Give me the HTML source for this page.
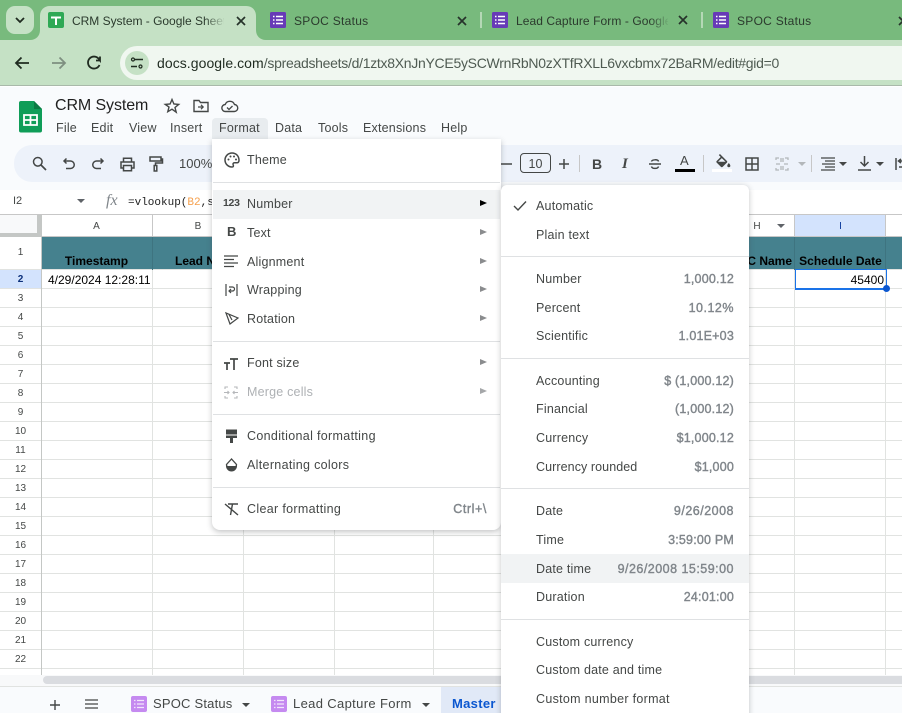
<!DOCTYPE html>
<html><head><meta charset="utf-8">
<style>
html,body{margin:0;padding:0;width:902px;height:713px;overflow:hidden;background:#fff;font-family:"Liberation Sans",sans-serif}
div,span,svg{position:absolute;display:block;box-sizing:border-box}
.t{white-space:nowrap;line-height:20px;height:20px}
.tab{font-size:12px;color:#2b3a2d;top:11px;letter-spacing:.28px}
.m{font-size:12.5px;color:#444746;top:118px;letter-spacing:.2px}
.i{font-size:12.5px;color:#444746;left:247px;letter-spacing:.2px;margin-top:1px}
.s{font-size:12.5px;color:#444746;left:536px;letter-spacing:.2px;margin-top:1px}
.v{font-size:12.5px;color:#80868b;right:168px;letter-spacing:.2px;margin-top:1px;-webkit-text-stroke:.4px #80868b}
.sep{height:1px;background:#dfe1e3}
.r{font-size:10px;color:#444746;left:0;width:41px;text-align:center;margin-top:1px}
.c{font-size:10px;color:#444746;text-align:center;top:217px}
.h{font-size:12px;font-weight:bold;color:#000;top:251px}
.ar{width:0;height:0;border-left:7px solid #8a8c8e;border-top:3.5px solid transparent;border-bottom:3.5px solid transparent;left:480px}
svg{overflow:visible}
.ic{fill:none;stroke:#444746;stroke-width:1.5}
</style></head><body>
<div style="left:0;top:0;width:902px;height:713px;overflow:hidden">

<!-- Chrome tab strip -->
<div style="left:0;top:0;width:902px;height:40px;background:#78ba7d"></div>
<div style="left:6px;top:6px;width:28px;height:28px;border-radius:9px;background:#c5e1c5"></div>
<svg style="left:0;top:0" width="40" height="40"><path d="M16 18l4 4 4-4" fill="none" stroke="#1f2b20" stroke-width="1.8"/></svg>
<svg style="left:30px;top:0" width="236" height="41"><path d="M0 40c6 0 10-4 10-10V16C10 10 14 6 20 6H216c6 0 10 4 10 10v14c0 6 4 10 10 10z" fill="#c5e1c5"/></svg>
<svg style="left:48px;top:12px" width="16" height="16"><rect width="16" height="16" rx="2" fill="#2fa955"/><path d="M3 5.500h10M8 5.500V13" stroke="#fff" stroke-width="2" fill="none"/></svg>
<div class="t tab" style="left:72px;width:152px;overflow:hidden;letter-spacing:-.02px">CRM System - Google Sheets</div>
<div style="left:204px;top:12px;width:22px;height:18px;background:linear-gradient(90deg,rgba(197,225,197,0),#c5e1c5)"></div>
<svg style="left:235px;top:15px" width="12" height="12"><path d="M2 2l8 8M10 2l-8 8" stroke="#26332a" stroke-width="1.7"/></svg>

<svg style="left:270px;top:12px" width="16" height="16"><rect width="16" height="16" rx="1.500" fill="#673ab7"/><path d="M3 4.500h1.500M6 4.500h7M3 8h1.500M6 8h7M3 11.500h1.500M6 11.500h7" stroke="#fff" stroke-width="1.600"/></svg>
<div class="t tab" style="left:294px">SPOC Status</div>
<svg style="left:456px;top:15px" width="12" height="12"><path d="M2 2l8 8M10 2l-8 8" stroke="#26332a" stroke-width="1.7"/></svg>
<div style="left:480px;top:12px;width:2px;height:16px;background:#b5d8b6"></div>
<svg style="left:492px;top:12px" width="16" height="16"><rect width="16" height="16" rx="1.500" fill="#673ab7"/><path d="M3 4.500h1.500M6 4.500h7M3 8h1.500M6 8h7M3 11.500h1.500M6 11.500h7" stroke="#fff" stroke-width="1.600"/></svg>
<div class="t tab" style="left:516px;width:152px;overflow:hidden;letter-spacing:.08px">Lead Capture Form - Google Forms</div>
<div style="left:650px;top:12px;width:20px;height:18px;background:linear-gradient(90deg,rgba(120,186,125,0),#78ba7d)"></div>
<svg style="left:677px;top:14px" width="12" height="12"><path d="M2 2l8 8M10 2l-8 8" stroke="#26332a" stroke-width="1.7"/></svg>
<div style="left:701px;top:12px;width:2px;height:16px;background:#b5d8b6"></div>
<svg style="left:713px;top:12px" width="16" height="16"><rect width="16" height="16" rx="1.500" fill="#673ab7"/><path d="M3 4.500h1.500M6 4.500h7M3 8h1.500M6 8h7M3 11.500h1.500M6 11.500h7" stroke="#fff" stroke-width="1.600"/></svg>
<div class="t tab" style="left:737px">SPOC Status</div>
<svg style="left:897px;top:15px" width="12" height="12"><path d="M2 2l8 8M10 2l-8 8" stroke="#26332a" stroke-width="1.7"/></svg>

<!-- Chrome toolbar -->
<div style="left:0;top:40px;width:902px;height:46px;background:#c5e1c5;border-bottom:1px solid #a9b9aa"></div>
<svg style="left:12px;top:53px" width="20" height="20"><path d="M17 10H4M9.500 4.500L4 10l5.500 5.500" fill="none" stroke="#1f2b20" stroke-width="1.800"/></svg>
<svg style="left:48px;top:53px" width="20" height="20"><path d="M4 10h13M11.500 4.500L17 10l-5.500 5.500" fill="none" stroke="#7e8f80" stroke-width="1.800"/></svg>
<svg style="left:84px;top:53px" width="20" height="20"><path d="M15.500 12a6 6 0 1 1-.8-6.200L16 7.500V3.500M16 7.500h-4" fill="none" stroke="#1f2b20" stroke-width="1.800"/></svg>
<div style="left:120px;top:46px;width:800px;height:34px;border-radius:17px;background:#f0f7f0"></div>
<div style="left:125px;top:51px;width:24px;height:24px;border-radius:12px;background:#c5e1c5"></div>
<svg style="left:130px;top:56px" width="14" height="14"><path d="M1 10.500h6M3 3.500h10" stroke="#1f2b20" stroke-width="1.400" fill="none"/><circle cx="3" cy="3.500" r="1.500" fill="#c5e1c5" stroke="#1f2b20" stroke-width="1.200"/><circle cx="10.500" cy="10.500" r="1.500" fill="#c5e1c5" stroke="#1f2b20" stroke-width="1.200"/></svg>
<div class="t" style="left:157px;top:53px;font-size:14px;color:#1f2b20;letter-spacing:.06px">docs.google.com<span style="position:static;display:inline;color:#4f5b52;letter-spacing:-.285px">/spreadsheets/d/1ztx8XnJnYCE5ySCWrnRbN0zXTfRXLL6vxcbmx72BaRM/edit#gid=0</span></div>

<!-- Docs header -->
<div style="left:0;top:87px;width:902px;height:103px;background:#f9fbfd"></div>
<svg style="left:19px;top:101px" width="23" height="32"><path d="M2 0H15L23 8V29.500a2 2 0 0 1-2 2H2a2 2 0 0 1-2-2V2a2 2 0 0 1 2-2z" fill="#0f9d58"/><path d="M15 0l8 8h-8z" fill="#0b7a43"/><path d="M5 14h13v10H5z" fill="none" stroke="#fff" stroke-width="1.800"/><path d="M5 19h13M11.500 14v10" stroke="#fff" stroke-width="1.800"/></svg>
<div class="t" style="left:55px;top:96px;font-size:16px;color:#1f1f1f;letter-spacing:-.1px">CRM System</div>
<svg style="left:164px;top:98px" width="16" height="16"><path d="M8 1.500l1.900 4.500 4.800.4-3.700 3.100 1.200 4.700L8 11.200l-4.200 2.500 1.200-4.700L1.300 6.400 6.100 6z" fill="none" stroke="#444746" stroke-width="1.400"/></svg>
<svg style="left:193px;top:99px" width="16" height="14"><path d="M1 1.500h5l1.500 2h7.500v9H1z" fill="none" stroke="#444746" stroke-width="1.400"/><path d="M5 8h5M8 5.800L10.200 8 8 10.200" fill="none" stroke="#444746" stroke-width="1.200"/></svg>
<svg style="left:221px;top:99px" width="17" height="14"><path d="M4.500 12.500a3.500 3.500 0 0 1-.3-7A5 5 0 0 1 13.500 5.500a3.500 3.500 0 0 1-.5 7z" fill="none" stroke="#444746" stroke-width="1.400"/><path d="M6 8.500l2 2 3.500-3.500" fill="none" stroke="#444746" stroke-width="1.300"/></svg>

<div class="t m" style="left:56px">File</div>
<div class="t m" style="left:91px">Edit</div>
<div class="t m" style="left:129px">View</div>
<div class="t m" style="left:170px">Insert</div>
<div style="left:212px;top:118px;width:56px;height:21px;border-radius:4px 4px 0 0;background:#e8ecef"></div>
<div class="t m" style="left:219px">Format</div>
<div class="t m" style="left:275px">Data</div>
<div class="t m" style="left:318px">Tools</div>
<div class="t m" style="left:363px">Extensions</div>
<div class="t m" style="left:441px">Help</div>

<!-- Sheets toolbar -->
<div style="left:14px;top:145px;width:920px;height:37px;border-radius:18px;background:#edf2fa"></div>
<svg style="left:32px;top:156px" width="15" height="15"><circle cx="5.800" cy="5.800" r="4.300" fill="none" stroke="#444746" stroke-width="1.500"/><path d="M9 9l5 5" stroke="#444746" stroke-width="1.700"/></svg>
<svg style="left:62px;top:157px" width="14" height="14"><path d="M4.500 1.500L2 4l2.500 2.500M2 4h6.500a3.500 3.500 0 0 1 0 7.500H4" class="ic"/></svg>
<svg style="left:91px;top:157px" width="14" height="14"><path d="M9.500 1.500L12 4 9.500 6.500M12 4H5.500a3.500 3.500 0 0 0 0 7.500H10" class="ic"/></svg>
<svg style="left:120px;top:157px" width="15" height="15"><path d="M3.500 5V1.200h8V5M3.500 11H1V5h13v6h-2.500M3.500 8.500h8v5.300h-8z" class="ic"/></svg>
<svg style="left:149px;top:156px" width="14" height="16"><path d="M1 1h11v4H1zM12 3h1.500v4H6.500v2.500M5.200 9.500h2.600v5.500H5.200z" class="ic"/></svg>
<div class="t" style="left:179px;top:154px;font-size:13px;color:#444746">100%</div>
<svg style="left:499px;top:160px" width="14" height="8"><path d="M1 4h12" stroke="#444746" stroke-width="1.500"/></svg>
<div style="left:520px;top:153px;width:31px;height:20px;border:1px solid #444746;border-radius:4px"></div>
<div class="t" style="left:520px;top:154px;width:31px;text-align:center;font-size:12.500px;color:#444746">10</div>
<svg style="left:558px;top:158px" width="12" height="12"><path d="M1 6h10M6 1v10" stroke="#444746" stroke-width="1.500"/></svg>
<div style="left:579px;top:155px;width:1px;height:17px;background:#c7c7c7"></div>
<div class="t" style="left:592px;top:154px;font-size:14px;font-weight:bold;color:#444746">B</div>
<div class="t" style="left:622px;top:154px;font-size:15px;font-weight:bold;font-style:italic;font-family:'Liberation Serif',serif;color:#444746">I</div>
<svg style="left:648px;top:157px" width="14" height="14"><path d="M1 7h12M3.500 4.500C4 2.500 10 2 10.500 4.500M3.500 9.500C4 12 10 12 10.500 9.500" class="ic"/></svg>
<div class="t" style="left:680px;top:151px;font-size:13px;color:#444746">A</div>
<div style="left:675px;top:169px;width:20px;height:3px;background:#000"></div>
<div style="left:703px;top:155px;width:1px;height:17px;background:#c7c7c7"></div>
<svg style="left:714px;top:154px" width="18" height="14"><g transform="scale(.78)"><path d="M16.560 8.940L7.620 0 6.210 1.410l2.380 2.380-5.150 5.150c-.59.59-.59 1.540 0 2.120l5.500 5.500c.29.29.68.44 1.060.44s.77-.15 1.060-.44l5.500-5.500c.59-.58.59-1.530 0-2.120zM5.210 10L10 5.210 14.790 10H5.210zM19 11.500s-2 2.170-2 3.500c0 1.100.9 2 2 2s2-.9 2-2c0-1.330-2-3.500-2-3.500z" fill="#444746"/></g></svg>
<div style="left:712px;top:169px;width:20px;height:3px;background:#fff"></div>
<svg style="left:745px;top:157px" width="14" height="14"><path d="M1 1h12v12H1zM1 7h12M7 1v12" class="ic"/></svg>
<svg style="left:775px;top:157px" width="14" height="14"><path d="M1 3V1h3M10 1h3v2M1 11v2h3M10 13h3v-2M6 1v4M8 1v4M6 9v4M8 9v4M1 7h4M13 7H9" fill="none" stroke="#b3b7ba" stroke-width="1.300"/></svg>
<div style="left:798px;top:162px;border-top:4px solid #b3b7ba;border-left:4px solid transparent;border-right:4px solid transparent;width:0;height:0"></div>
<div style="left:811px;top:155px;width:1px;height:17px;background:#c7c7c7"></div>
<svg style="left:821px;top:157px" width="14" height="14"><path d="M0 1h14M4 4h10M1 7h13M4 10h10M0 13h14" stroke="#444746" stroke-width="1.300"/></svg>
<div style="left:839px;top:162px;border-top:4px solid #444746;border-left:4px solid transparent;border-right:4px solid transparent;width:0;height:0"></div>
<svg style="left:858px;top:156px" width="13" height="15"><path d="M6.500 0v9M2.500 6l4 4 4-4M0 14h13" class="ic"/></svg>
<div style="left:876px;top:162px;border-top:4px solid #444746;border-left:4px solid transparent;border-right:4px solid transparent;width:0;height:0"></div>
<svg style="left:895px;top:158px" width="10" height="12"><path d="M1 0v12M10 3H4M4 9h6M6 1L3.500 3 6 5" class="ic"/></svg>

<!-- Formula bar -->
<div style="left:0;top:190px;width:902px;height:24px;background:#fff"></div>
<div class="t" style="left:13px;top:191px;font-size:11px;color:#444746">I2</div>
<div style="left:77px;top:199px;border-top:4px solid #5f6368;border-left:4px solid transparent;border-right:4px solid transparent;width:0;height:0"></div>
<div class="t" style="left:106px;top:191px;font-size:16px;font-style:italic;font-family:'Liberation Serif',serif;color:#80868b">fx</div>
<div class="t" style="left:128px;top:193px;font-size:11px;font-family:'Liberation Mono',monospace;color:#1f1f1f">=vlookup(<span style="position:static;display:inline;color:#f6a04d">B2</span>,s</div>

<!-- Grid -->
<div style="left:0;top:214px;width:902px;height:461px;background:#fff"></div>
<div style="left:0;top:214px;width:902px;height:1px;background:#c7c7c7"></div>
<div style="left:0;top:215px;width:41px;height:22px;background:#f8f9fa"></div>
<div style="left:37px;top:215px;width:4px;height:22px;background:#c4c7c5"></div>
<div style="left:0;top:233px;width:41px;height:4px;background:#c4c7c5"></div>
<div style="left:795px;top:215px;width:91px;height:21px;background:#d3e3fd"></div>
<div style="left:41px;top:236px;width:861px;height:1px;background:#c7c7c7"></div>
<div style="left:0;top:270px;width:41px;height:19px;background:#d3e3fd"></div>
<div style="left:41px;top:237px;width:861px;height:33px;background:#45818e"></div>
<div style="left:0;top:288px;width:902px;height:387px;background:repeating-linear-gradient(180deg,#e1e3e1 0,#e1e3e1 1px,transparent 1px,transparent 19px)"></div>
<div style="left:0;top:269px;width:902px;height:1px;background:#e1e3e1"></div>
<div style="left:41px;top:215px;width:1px;height:460px;background:#c4c7c5"></div>
<div style="left:152px;top:215px;width:1px;height:22px;background:#c7c7c7"></div>
<div style="left:152px;top:237px;width:1px;height:33px;background:#3e7480"></div>
<div style="left:152px;top:270px;width:1px;height:405px;background:#e1e3e1"></div>
<div style="left:243px;top:215px;width:1px;height:22px;background:#c7c7c7"></div>
<div style="left:243px;top:270px;width:1px;height:405px;background:#e1e3e1"></div>
<div style="left:334px;top:270px;width:1px;height:405px;background:#e1e3e1"></div>
<div style="left:433px;top:270px;width:1px;height:405px;background:#e1e3e1"></div>
<div style="left:794px;top:215px;width:1px;height:22px;background:#c7c7c7"></div>
<div style="left:794px;top:237px;width:1px;height:33px;background:#3e7480"></div>
<div style="left:794px;top:270px;width:1px;height:405px;background:#e1e3e1"></div>
<div style="left:885px;top:215px;width:1px;height:22px;background:#c7c7c7"></div>
<div style="left:885px;top:237px;width:1px;height:33px;background:#3e7480"></div>
<div style="left:885px;top:270px;width:1px;height:405px;background:#e1e3e1"></div>

<div class="t c" style="left:41px;width:111px">A</div>
<div class="t c" style="left:153px;width:90px">B</div>
<div class="t c" style="left:747px;width:20px">H</div>
<div style="left:777px;top:224px;border-top:4px solid #5f6368;border-left:4px solid transparent;border-right:4px solid transparent;width:0;height:0"></div>
<div class="t c" style="left:795px;width:91px;color:#0b3a9c">I</div>

<div class="t h" style="left:41px;width:111px;text-align:center">Timestamp</div>
<div class="t h" style="left:175px">Lead N</div>
<div class="t h" style="left:740px;width:52px;text-align:right">C Name</div>
<div class="t h" style="left:795px;width:91px;text-align:center">Schedule Date</div>
<div class="t" style="left:48px;top:270px;font-size:12px;color:#000">4/29/2024 12:28:11</div>
<div class="t" style="left:795px;top:270px;width:89px;text-align:right;font-size:12px;color:#000">45400</div>
<div style="left:795px;top:269px;width:92px;height:21px;border:2px solid #1a73e8;border-top:1px solid #1a73e8;border-left:1px solid #1a73e8;border-right:1px solid #1a73e8"></div>
<div style="left:883px;top:285px;width:7px;height:7px;border-radius:50%;background:#0b57d0"></div>

<div class="t r" style="top:242px">1</div>
<div class="t r" style="top:269px;font-weight:bold;color:#0b2f7a">2</div>
<div class="t r" style="top:288px">3</div>
<div class="t r" style="top:307px">4</div>
<div class="t r" style="top:326px">5</div>
<div class="t r" style="top:345px">6</div>
<div class="t r" style="top:364px">7</div>
<div class="t r" style="top:383px">8</div>
<div class="t r" style="top:402px">9</div>
<div class="t r" style="top:421px">10</div>
<div class="t r" style="top:440px">11</div>
<div class="t r" style="top:459px">12</div>
<div class="t r" style="top:478px">13</div>
<div class="t r" style="top:497px">14</div>
<div class="t r" style="top:516px">15</div>
<div class="t r" style="top:535px">16</div>
<div class="t r" style="top:554px">17</div>
<div class="t r" style="top:573px">18</div>
<div class="t r" style="top:592px">19</div>
<div class="t r" style="top:611px">20</div>
<div class="t r" style="top:630px">21</div>
<div class="t r" style="top:649px">22</div>

<!-- Scroll bar -->
<div style="left:0;top:675px;width:902px;height:12px;background:#f8f9fa;border-bottom:1px solid #e1e3e1"></div>
<div style="left:43px;top:676px;width:859px;height:8px;border-radius:4px 0 0 4px;background:#dadce0"></div>

<!-- Bottom bar -->
<div style="left:0;top:687px;width:902px;height:26px;background:#f9fbfd"></div>
<svg style="left:49px;top:699px" width="12" height="12"><path d="M1 6h10M6 1v10" stroke="#444746" stroke-width="1.400"/></svg>
<svg style="left:85px;top:699px" width="14" height="10"><path d="M0 1h13M0 5h13M0 9h13" stroke="#444746" stroke-width="1.300"/></svg>
<svg style="left:131px;top:696px" width="16" height="16"><rect width="16" height="16" rx="2" fill="#c58af0"/><path d="M3 4.500h1.500M6 4.500h7M3 8h1.500M6 8h7M3 11.500h1.500M6 11.500h7" stroke="#f3e6fb" stroke-width="1.300"/></svg>
<div class="t" style="left:153px;top:694px;font-size:13px;color:#444746;letter-spacing:.2px">SPOC Status</div>
<div style="left:242px;top:703px;border-top:4px solid #444746;border-left:4px solid transparent;border-right:4px solid transparent;width:0;height:0"></div>
<svg style="left:271px;top:696px" width="16" height="16"><rect width="16" height="16" rx="2" fill="#c58af0"/><path d="M3 4.500h1.500M6 4.500h7M3 8h1.500M6 8h7M3 11.500h1.500M6 11.500h7" stroke="#f3e6fb" stroke-width="1.300"/></svg>
<div class="t" style="left:293px;top:694px;font-size:13px;color:#444746;letter-spacing:.35px">Lead Capture Form</div>
<div style="left:422px;top:703px;border-top:4px solid #444746;border-left:4px solid transparent;border-right:4px solid transparent;width:0;height:0"></div>
<div style="left:441px;top:687px;width:70px;height:26px;background:#e1e9f7"></div>
<div class="t" style="left:452px;top:694px;font-size:13px;font-weight:bold;color:#0b57d0;letter-spacing:.3px">Master</div>

<!-- Format menu -->
<div style="left:212px;top:139px;width:289px;height:391px;background:#fff;border-radius:0 0 8px 8px;box-shadow:0 2px 6px rgba(60,64,67,.3)"></div>
<svg style="left:224px;top:152px" width="16" height="16"><path d="M8 1a7 7 0 0 0 0 14c1.500 0 1.700-1.200 1.200-2-.6-1 0-2.200 1.300-2.200H13c1.200 0 2-1 2-2.500C15 4 12 1 8 1z" class="ic"/><circle cx="4.500" cy="7.500" r="1" fill="#444746"/><circle cx="6.500" cy="4.500" r="1" fill="#444746"/><circle cx="10" cy="4.500" r="1" fill="#444746"/><circle cx="12" cy="7.500" r="1" fill="#444746"/></svg>
<div class="t i" style="top:149px">Theme</div>
<div class="sep" style="left:213px;top:182px;width:287px"></div>
<div style="left:213px;top:190px;width:287px;height:29px;background:#f1f3f4"></div>
<div class="t" style="left:223px;top:193px;font-size:10.500px;font-weight:bold;color:#444746;letter-spacing:-.3px">123</div>
<div class="t i" style="top:193px">Number</div>
<div class="ar" style="top:200px;border-left-color:#000"></div>
<div class="t" style="left:227px;top:222px;font-size:13px;font-weight:bold;color:#444746">B</div>
<div class="t i" style="top:222px">Text</div>
<div class="ar" style="top:229px"></div>
<svg style="left:224px;top:255px" width="15" height="13"><path d="M0 1h14M0 4.500h10M0 8h14M0 11.500h10" stroke="#444746" stroke-width="1.200"/></svg>
<div class="t i" style="top:251px">Alignment</div>
<div class="ar" style="top:258px"></div>
<svg style="left:225px;top:284px" width="13" height="12"><path d="M1 0v12M12 0v12M4 3h3.500a2 2 0 0 1 0 4H4M6 5L4 7l2 2" fill="none" stroke="#444746" stroke-width="1.200"/></svg>
<div class="t i" style="top:279px">Wrapping</div>
<div class="ar" style="top:286px"></div>
<svg style="left:225px;top:312px" width="14" height="13"><path d="M1 1l4 11 8-6zM4 2.500L7 8" fill="none" stroke="#444746" stroke-width="1.200"/></svg>
<div class="t i" style="top:308px">Rotation</div>
<div class="ar" style="top:315px"></div>
<div class="sep" style="left:213px;top:341px;width:287px"></div>
<svg style="left:224px;top:357px" width="14" height="13"><path d="M0 6h6M3 6v7M6 2h8M10 2v11" stroke="#444746" stroke-width="1.700" fill="none"/></svg>
<div class="t i" style="top:352px">Font size</div>
<div class="ar" style="top:359px"></div>
<svg style="left:224px;top:386px" width="14" height="13"><path d="M1 3V1h3M10 1h3v2M1 10v2h3M10 12h3v-2M0 6.500h5M14 6.500H9M3.500 5L5 6.500 3.500 8M10.500 5L9 6.500 10.500 8" fill="none" stroke="#b5b7ba" stroke-width="1.100"/></svg>
<div class="t i" style="top:381px;color:#aeb1b4">Merge cells</div>
<div class="ar" style="top:388px;border-left-color:#a5a7a9"></div>
<div class="sep" style="left:213px;top:414px;width:287px"></div>
<svg style="left:225px;top:429px" width="13" height="15"><path d="M1 .5h11V9H1z" fill="#444746"/><path d="M1 6h11" stroke="#fff" stroke-width="1"/><path d="M5 9h3v5H5z" fill="#444746"/></svg>
<div class="t i" style="top:425px;letter-spacing:.33px">Conditional formatting</div>
<svg style="left:225px;top:458px" width="13" height="14"><path d="M6.500 1L1.500 6.500a5 5 0 1 0 10 0z" fill="none" stroke="#444746" stroke-width="1.300"/><path d="M1 8h11a5.500 5.500 0 0 1-11 0z" fill="#444746"/></svg>
<div class="t i" style="top:454px;letter-spacing:.32px">Alternating colors</div>
<div class="sep" style="left:213px;top:487px;width:287px"></div>
<svg style="left:225px;top:503px" width="14" height="13"><path d="M3 1h10M7.500 1L5.500 12M0 1l13 11" fill="none" stroke="#444746" stroke-width="1.400"/></svg>
<div class="t i" style="top:498px;letter-spacing:.33px">Clear formatting</div>
<div class="t" style="right:415px;top:499px;font-size:12.500px;color:#80868b;letter-spacing:.6px;-webkit-text-stroke:.4px #80868b">Ctrl+\</div>

<!-- Number submenu -->
<div style="left:501px;top:185px;width:248px;height:535px;background:#fff;border-radius:6px 6px 0 0;box-shadow:0 1px 6px rgba(60,64,67,.3)"></div>
<svg style="left:513px;top:200px" width="14" height="12"><path d="M1 6l4 4 8-8.500" fill="none" stroke="#444746" stroke-width="1.400"/></svg>
<div class="t s" style="top:195px">Automatic</div>
<div class="t s" style="top:224px">Plain text</div>
<div class="sep" style="left:501px;top:256px;width:248px"></div>
<div class="t s" style="top:268px">Number</div><div class="t v" style="top:268px">1,000.12</div>
<div class="t s" style="top:297px">Percent</div><div class="t v" style="top:297px;letter-spacing:.5px">10.12%</div>
<div class="t s" style="top:325px">Scientific</div><div class="t v" style="top:325px">1.01E+03</div>
<div class="sep" style="left:501px;top:358px;width:248px"></div>
<div class="t s" style="top:370px">Accounting</div><div class="t v" style="top:370px">$ (1,000.12)</div>
<div class="t s" style="top:398px">Financial</div><div class="t v" style="top:398px">(1,000.12)</div>
<div class="t s" style="top:427px">Currency</div><div class="t v" style="top:427px">$1,000.12</div>
<div class="t s" style="top:456px;letter-spacing:.08px">Currency rounded</div><div class="t v" style="top:456px">$1,000</div>
<div class="sep" style="left:501px;top:488px;width:248px"></div>
<div class="t s" style="top:500px">Date</div><div class="t v" style="top:500px;letter-spacing:.5px">9/26/2008</div>
<div class="t s" style="top:529px">Time</div><div class="t v" style="top:529px">3:59:00 PM</div>
<div style="left:501px;top:554px;width:248px;height:29px;background:#f1f3f4"></div>
<div class="t s" style="top:558px">Date time</div><div class="t v" style="top:558px;letter-spacing:.48px">9/26/2008 15:59:00</div>
<div class="t s" style="top:586px">Duration</div><div class="t v" style="top:586px">24:01:00</div>
<div class="sep" style="left:501px;top:619px;width:248px"></div>
<div class="t s" style="top:631px">Custom currency</div>
<div class="t s" style="top:659px">Custom date and time</div>
<div class="t s" style="top:688px;letter-spacing:.3px">Custom number format</div>

</div>
</body></html>
